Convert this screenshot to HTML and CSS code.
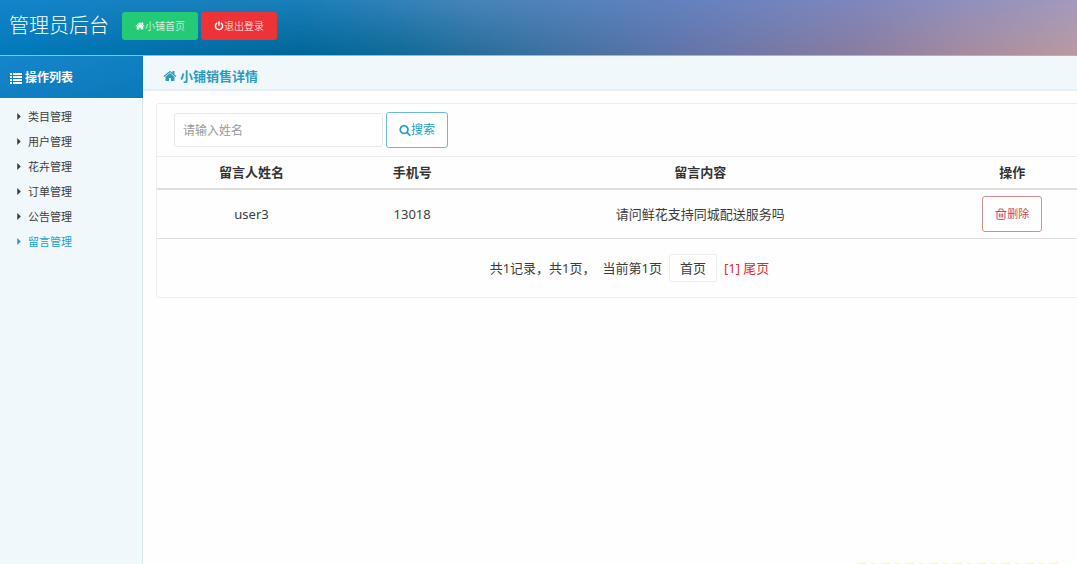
FILE: index.html
```html
<!DOCTYPE html>
<html lang="zh-CN">
<head>
<meta charset="utf-8">
<title>管理员后台</title>
<link rel="stylesheet" href="styles.css">
</head>
<body>
<svg class="sprite" aria-hidden="true">
  <symbol id="home" viewBox="0 0 1792 1792"><path d="M1472 992v480q0 26-19 45t-45 19h-384v-384h-256v384h-384q-26 0-45-19t-19-45v-480q0-1 .5-3t.5-3l575-474 575 474q1 2 1 6zm223-69l-62 74q-8 9-21 11h-3q-13 0-21-7l-692-577-692 577q-12 8-24 7-13-2-21-11l-62-74q-8-10-7-23.5t11-21.5l719-599q32-26 76-26t76 26l244 204v-195q0-14 9-23t23-9h192q14 0 23 9t9 23v408l219 182q10 8 11 21.5t-7 23.5z"/></symbol>
  <symbol id="power" viewBox="0 0 1792 1792"><path d="M1664 896q0 156-61 298t-164 245-245 164-298 61-298-61-245-164-164-245-61-298q0-182 80.5-343t226.5-270q43-32 95.5-25t83.5 50q32 42 24.500 94.500t-49.500 84.500q-98 74-151.500 181t-53.500 228q0 104 40.500 198.500t109.500 163.500 163.500 109.500 198.500 40.500 198.500-40.500 163.500-109.500 109.500-163.500 40.500-198.500q0-121-53.500-228t-151.500-181q-42-32-49.500-84.500t24.500-94.500q31-43 84-50t95 25q146 109 226.500 270t80.500 343zm-640-768v640q0 52-38 90t-90 38-90-38-38-90v-640q0-52 38-90t90-38 90 38 38 90z"/></symbol>
  <symbol id="search" viewBox="0 0 1792 1792"><path d="M1216 832q0-185-131.500-316.500t-316.500-131.500-316.500 131.500-131.500 316.500 131.500 316.500 316.500 131.500 316.500-131.500 131.500-316.500zm512 832q0 52-38 90t-90 38q-54 0-90-38l-343-342q-179 124-399 124-143 0-273.500-55.500t-225-150-150-225-55.500-273.500 55.500-273.500 150-225 225-150 273.500-55.500 273.500 55.500 225 150 150 225 55.500 273.500q0 220-124 399l343 343q37 37 37 90z"/></symbol>
  <symbol id="list" viewBox="0 0 12 12"><path d="M0 1h2v2H0zM3 1h9v2H3zM0 4h2v2H0zM3 4h9v2H3zM0 7h2v2H0zM3 7h9v2H3zM0 10h2v2H0zM3 10h9v2H3z"/></symbol>
  <symbol id="trash" viewBox="0 0 12 12"><path d="M.5 3.500h11M3.500 3.500l.8-2.500h3.400l.8 2.500M2 3.500v6.500q0 1.400 1.300 1.400h5.400q1.300 0 1.300-1.400V3.500M4.300 5.500v4M6 5.500v4M7.700 5.500v4" fill="none" stroke="currentColor"/></symbol>
  <symbol id="caret" viewBox="0 0 4 8"><path d="M0 0l4 4-4 4z"/></symbol>
</svg>

<header class="topbar">
  <h1 class="brand">管理员后台</h1>
  <nav class="top-actions">
    <a class="btn btn-green" href="#"><svg class="icon-sm"><use href="#home"/></svg>小铺首页</a>
    <a class="btn btn-red" href="#"><svg class="icon-sm"><use href="#power"/></svg>退出登录</a>
  </nav>
</header>

<div class="layout">
  <aside class="sidebar">
    <h2 class="sidebar-title"><svg class="icon"><use href="#list"/></svg>操作列表</h2>
    <nav class="menu">
      <a class="menu-item" href="#"><svg class="caret"><use href="#caret"/></svg>类目管理</a>
      <a class="menu-item" href="#"><svg class="caret"><use href="#caret"/></svg>用户管理</a>
      <a class="menu-item" href="#"><svg class="caret"><use href="#caret"/></svg>花卉管理</a>
      <a class="menu-item" href="#"><svg class="caret"><use href="#caret"/></svg>订单管理</a>
      <a class="menu-item" href="#"><svg class="caret"><use href="#caret"/></svg>公告管理</a>
      <a class="menu-item active" href="#"><svg class="caret"><use href="#caret"/></svg>留言管理</a>
    </nav>
  </aside>

  <main class="content">
    <h2 class="page-title"><svg class="icon-lg"><use href="#home"/></svg>小铺销售详情</h2>
    <section class="panel">
      <form class="search">
        <input class="search-input" type="text" placeholder="请输入姓名" aria-label="姓名">
        <button class="btn-outline btn-search" type="button"><svg class="icon"><use href="#search"/></svg>搜索</button>
      </form>
      <table class="messages">
        <colgroup><col class="col-name"><col class="col-phone"><col class="col-text"><col class="col-action"></colgroup>
        <thead>
          <tr><th>留言人姓名</th><th>手机号</th><th>留言内容</th><th>操作</th></tr>
        </thead>
        <tbody>
          <tr>
            <td>user3</td><td>13018</td><td>请问鲜花支持同城配送服务吗</td>
            <td><button class="btn-outline btn-delete" type="button"><svg class="icon"><use href="#trash"/></svg>删除</button></td>
          </tr>
        </tbody>
      </table>
      <div class="pager">
        <span>共1记录，共1页，</span>
        <span>当前第1页</span>
        <a class="page-first" href="#">首页</a>
        <span class="page-links"><a href="#">[1]</a> <a href="#">尾页</a></span>
      </div>
    </section>
    <div class="edge-mark"></div>
  </main>
</div>
</body>
</html>
```

FILE: styles.css
```css
* { box-sizing: border-box; }

body {
  margin: 0;
  min-height: 100vh;
  display: flex;
  flex-direction: column;
  overflow: hidden;
  background: #fefefe;
  color: #3c3c3c;
  font: 14px/20px "Noto Sans", "Noto Sans CJK SC", sans-serif;
}

a { color: inherit; text-decoration: none; }
h1, h2 { margin: 0; }
svg { fill: currentColor; flex: none; }
.sprite { display: none; }
.icon-sm { width: 10px; height: 10px; }
.icon { width: 12px; height: 12px; }
.icon-lg { width: 14px; height: 14px; }

.topbar {
  position: relative;
  display: flex;
  align-items: center;
  gap: 13px;
  padding: 8px 9px 12px;
  border-bottom: 1px solid #8fbcd8;
  background: linear-gradient(to right, #1584ca, #1a7fb9 28%, #4784b9 44%, #6382bf 63%, #7f87bd 80%, #a39abd);
  color: #fff;
}
.topbar::before {
  content: "";
  position: absolute;
  inset: 0;
  background: linear-gradient(to right, #017abb, #006698 28%, #0f6a96 37%, #3a709e 50%, #6474a8 64%, #8a7d9f 80%, #a48a9e 89%, #ba9aa0);
  mask-image: linear-gradient(to bottom, transparent, #000);
}
.topbar > * { position: relative; }
.brand { font-size: 20px; line-height: 35px; font-weight: 300; }
.top-actions { display: flex; gap: 3px; }

.btn {
  display: flex;
  align-items: center;
  justify-content: center;
  height: 28px;
  padding: 0 13px;
  border-radius: 3px;
  font-size: 10px;
  font-weight: 300;
}
.btn-green { background: #25ca77; }
.btn-red { background: #ee3338; }

.layout { flex: 1; display: flex; }

.sidebar {
  width: 143px;
  flex: none;
  background: #f0f8fc;
  border-right: 1px solid #d9e8ef;
}
.sidebar-title {
  display: flex;
  align-items: center;
  gap: 3px;
  height: 42px;
  margin-right: -1px;
  padding: 2px 0 0 10px;
  background: linear-gradient(165deg, #1585cd, #0c79b7);
  color: #fff;
  font-size: 12px;
}
.menu { padding-top: 6px; }
.menu-item {
  display: flex;
  align-items: center;
  gap: 7px;
  height: 25px;
  padding-left: 17px;
  font-size: 11px;
}
.caret { width: 4px; height: 7px; }
.active { color: #1ba3cb; }

.content {
  flex: 1;
  min-width: 0;
  display: flex;
  flex-direction: column;
}
.page-title {
  display: flex;
  align-items: center;
  gap: 3px;
  height: 35px;
  padding: 6px 20px 0;
  border-bottom: 2px solid #e6eff3;
  background: #f1f8fc;
  color: #2a9dbd;
  font-size: 13px;
}

.panel {
  margin: 12px -26px 0 13px;
  border: 1px solid #ededee;
  border-radius: 3px;
}
.search {
  display: flex;
  align-items: center;
  gap: 3px;
  padding: 8px 17px;
}
.search-input {
  width: 209px;
  height: 34px;
  padding: 0 8px;
  border: 1px solid #e8e8e8;
  border-radius: 3px;
  background: #fff;
  font: inherit;
  font-size: 12px;
}
.search-input::placeholder { color: #999; }

.btn-outline {
  display: inline-flex;
  align-items: center;
  justify-content: center;
  height: 36px;
  padding: 0 12px;
  border: 1px solid currentColor;
  border-radius: 3px;
  background: #fff;
  font: inherit;
}
.btn-search { border-color: #6abbd8; color: #219fcd; font-size: 12px; }
.btn-delete { border-color: #d98a8c; color: #cf4b50; font-size: 11px; }

.messages {
  width: 100%;
  table-layout: fixed;
  border-collapse: collapse;
  border-top: 1px solid #ececec;
  font-size: 13px;
  text-align: center;
}
.col-name { width: 20%; }
.col-phone { width: 14%; }
.col-text { width: 47%; }
.col-action { width: 19%; }
.messages th { height: 32px; padding: 0; border-bottom: 2px solid #dedede; color: #333; }
.messages td { height: 50px; padding: 0; border-bottom: 1px solid #dedede; }
.messages td .btn-outline { vertical-align: middle; }

.pager {
  display: flex;
  align-items: center;
  justify-content: center;
  gap: 7px;
  padding: 15px 0;
  font-size: 13px;
}
.page-first {
  padding: 3px 10px;
  border: 1px solid #eee;
  border-radius: 2px;
}
.page-links { color: #dc2b2e; }

.edge-mark {
  width: 200px;
  height: 1px;
  margin: auto 20px 0 auto;
  background: repeating-linear-gradient(to right, #f8efc9 0 9px, #fefefe 9px 14px, #eef5d0 14px 19px, #fefefe 19px 24px);
}
```
